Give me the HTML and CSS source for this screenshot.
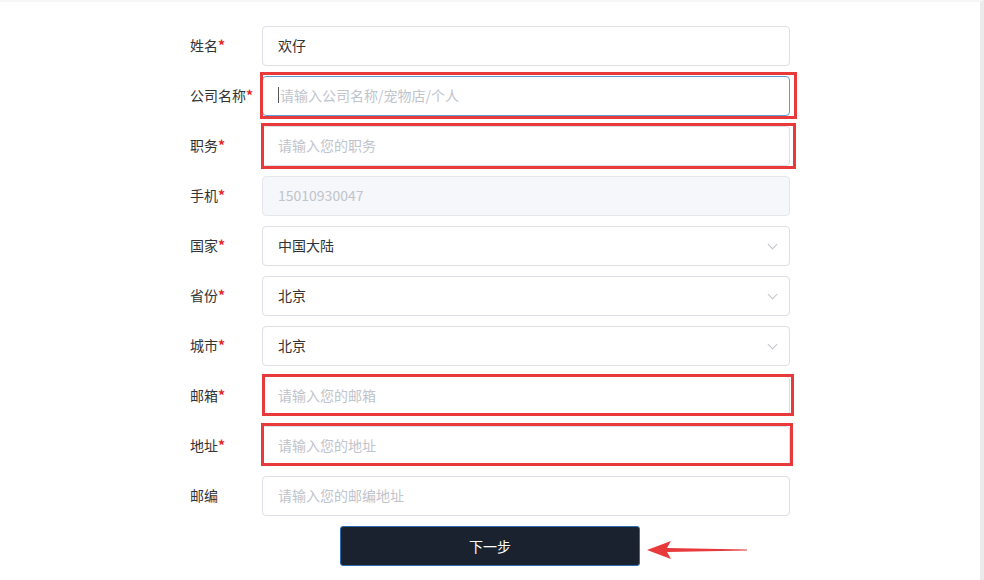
FILE: index.html
```html
<html>
<head>
    <meta charset="utf-8">
    <link rel="stylesheet" href="styles.css">
</head>
<body>
    <div class="page">
        <form class="infoForm">
            <div class="row">
                <label class="label">姓名<i>*</i></label>
                <div class="field"><input class="input" type="text" value="欢仔"></div>
            </div>
            <div class="row">
                <label class="label">公司名称<i>*</i></label>
                <div class="field">
                    <div class="input focused"><span class="caret"></span><span class="ph">请输入公司名称/宠物店/个人</span></div>
                    <span class="mark markCompany"></span>
                </div>
            </div>
            <div class="row">
                <label class="label">职务<i>*</i></label>
                <div class="field">
                    <input class="input" type="text" placeholder="请输入您的职务">
                    <span class="mark markJob"></span>
                </div>
            </div>
            <div class="row">
                <label class="label">手机<i>*</i></label>
                <div class="field"><input class="input" type="text" value="15010930047" disabled></div>
            </div>
            <div class="row">
                <label class="label">国家<i>*</i></label>
                <div class="field select"><input class="input" type="text" value="中国大陆" readonly><span class="arrow"></span></div>
            </div>
            <div class="row">
                <label class="label">省份<i>*</i></label>
                <div class="field select"><input class="input" type="text" value="北京" readonly><span class="arrow"></span></div>
            </div>
            <div class="row">
                <label class="label">城市<i>*</i></label>
                <div class="field select"><input class="input" type="text" value="北京" readonly><span class="arrow"></span></div>
            </div>
            <div class="row">
                <label class="label">邮箱<i>*</i></label>
                <div class="field">
                    <input class="input" type="text" placeholder="请输入您的邮箱">
                    <span class="mark markMail"></span>
                </div>
            </div>
            <div class="row">
                <label class="label">地址<i>*</i></label>
                <div class="field">
                    <input class="input" type="text" placeholder="请输入您的地址">
                    <span class="mark markAddr"></span>
                </div>
            </div>
            <div class="row">
                <label class="label">邮编</label>
                <div class="field"><input class="input" type="text" placeholder="请输入您的邮编地址"></div>
            </div>
            <div class="submitRow">
                <div class="submitWrap">
                    <button type="button" class="nextButton">下一步</button>
                    <svg class="pointer" width="104" height="18" viewBox="0 0 104 18">
                        <path d="M0 9 L24 0 L20 7 L100 8.5 L100 9.5 L20 11 L24 18 Z" fill="#e8393b"/>
                    </svg>
                </div>
            </div>
        </form>
    </div>
</body>
</html>
```

FILE: styles.css
```css
html, body {
    margin: 0;
    padding: 0;
    background: #fff;
}

body {
    font-family: "Noto Sans CJK SC", "Noto Sans", sans-serif;
    font-size: 14px;
    color: #333;
}

.page {
    width: 984px;
    height: 580px;
    border-right: 4px solid #ebebeb;
    border-top: 2px solid #f6f6f6;
    box-sizing: border-box;
    overflow: hidden;
}

.infoForm {
    width: 600px;
    margin: 24px 0 0 190px;
    display: flex;
    flex-direction: column;
    gap: 10px;
}

.row {
    display: flex;
    align-items: center;
    height: 40px;
}

.label {
    width: 72px;
    flex: none;
    line-height: 40px;
    padding-bottom: 2px;
    color: #333;
}

    .label i {
        font-style: normal;
        font-weight: bold;
        color: #e8242a;
    }

.field {
    position: relative;
    flex: 1;
    height: 40px;
}

.input {
    display: block;
    width: 100%;
    height: 40px;
    box-sizing: border-box;
    padding: 0 15px 2px;
    border: 1px solid #dcdfe6;
    border-radius: 4px;
    background: #fff;
    font-family: inherit;
    font-size: 14px;
    color: #333;
    outline: none;
    line-height: 36px;
}

    .input::placeholder {
        color: #c0c4cc;
    }

    .input:disabled {
        background: #f5f7fa;
        border-color: #e4e7ed;
        color: #c0c4cc;
    }

    .input.focused {
        border-color: #5b9bd8;
        display: flex;
        align-items: center;
    }

.ph {
    color: #c0c4cc;
}

.caret {
    width: 1px;
    height: 16px;
    background: #555;
    margin-right: 1px;
}

.arrow {
    position: absolute;
    right: 14px;
    top: 15px;
    width: 6px;
    height: 6px;
    border-right: 1px solid #c0c4cc;
    border-bottom: 1px solid #c0c4cc;
    transform: rotate(45deg);
}

.mark {
    position: absolute;
    border: 3px solid #e8393b;
    pointer-events: none;
}

.markCompany {
    top: -4px;
    left: -2px;
    right: -7px;
    bottom: -3px;
}

.markJob {
    top: -3px;
    left: -1px;
    right: -6px;
    bottom: -3px;
}

.markMail {
    top: -2px;
    left: 0;
    right: -4px;
    bottom: 0;
}

.markAddr {
    top: -3px;
    left: -1px;
    right: -3px;
    bottom: 0;
}

.submitRow {
    display: flex;
    justify-content: center;
}

.submitWrap {
    position: relative;
}

.nextButton {
    width: 300px;
    height: 40px;
    padding-bottom: 2px;
    background: #1a2230;
    border: 1px solid #2f6db3;
    border-radius: 3px;
    color: #fff;
    font-family: inherit;
    font-size: 14px;
}

.pointer {
    position: absolute;
    left: 307px;
    top: 15px;
}
```
